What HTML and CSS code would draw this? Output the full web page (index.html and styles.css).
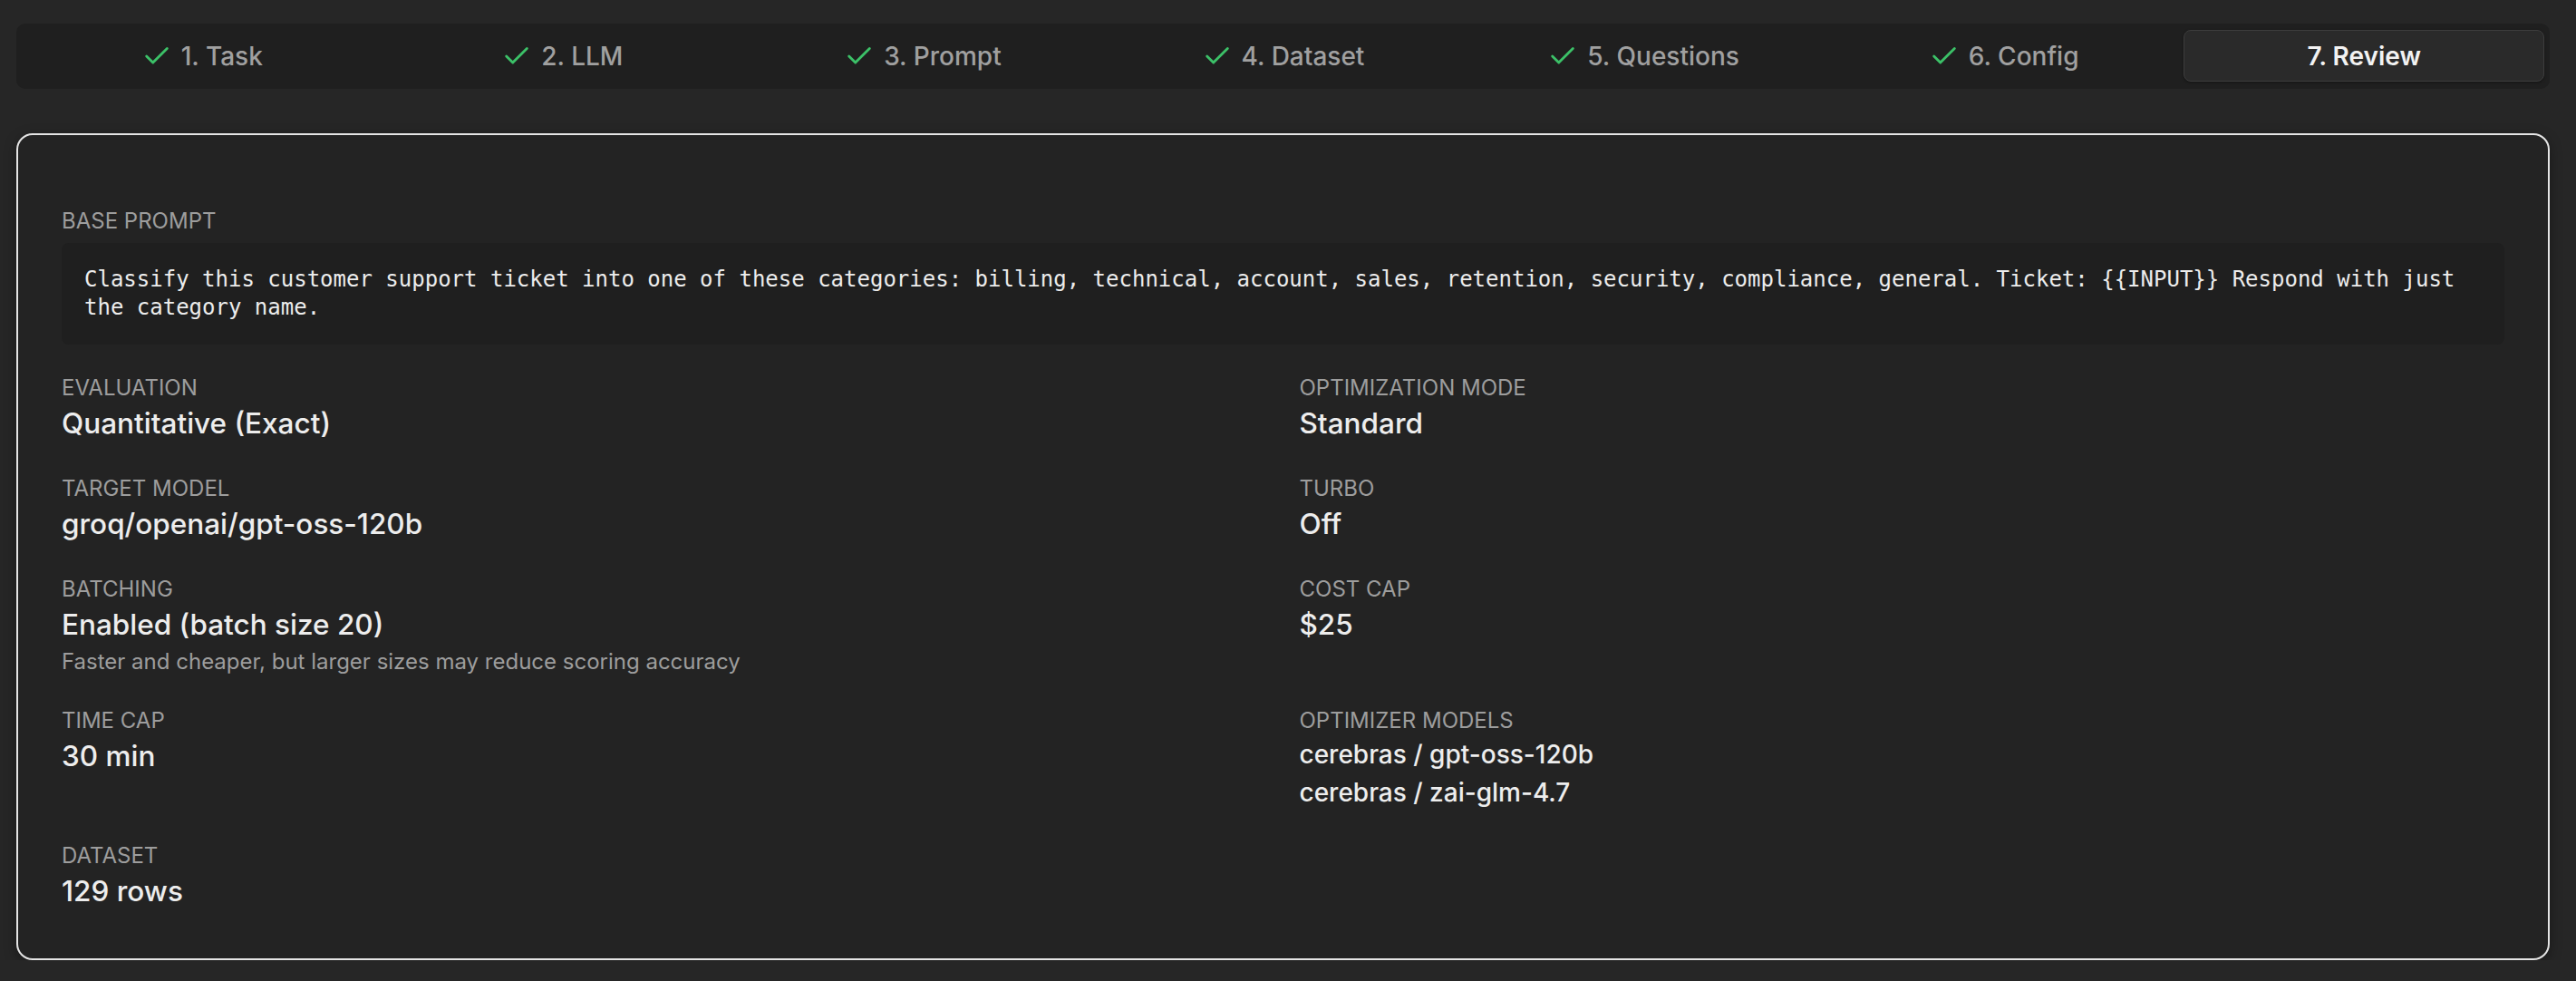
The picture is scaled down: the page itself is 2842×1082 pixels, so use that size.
FILE: index.html
```html
<!DOCTYPE html>
<html lang="en">
<head>
    <meta charset="UTF-8">
    <meta name="viewport" content="width=device-width, initial-scale=1.0">
    <title>Optimizer - Review</title>
    <link rel="stylesheet" href="styles.css">
</head>
<body>
    <div class="wizard">
        <!-- step bar, all steps done except the current one -->
        <nav class="steps">
            <div class="step done">
                <svg class="check" viewBox="0 0 24 24"><polyline points="20 6 9 17 4 12"/></svg>
                <span>1. Task</span>
            </div>
            <div class="step done">
                <svg class="check" viewBox="0 0 24 24"><polyline points="20 6 9 17 4 12"/></svg>
                <span>2. LLM</span>
            </div>
            <div class="step done">
                <svg class="check" viewBox="0 0 24 24"><polyline points="20 6 9 17 4 12"/></svg>
                <span>3. Prompt</span>
            </div>
            <div class="step done">
                <svg class="check" viewBox="0 0 24 24"><polyline points="20 6 9 17 4 12"/></svg>
                <span>4. Dataset</span>
            </div>
            <div class="step done">
                <svg class="check" viewBox="0 0 24 24"><polyline points="20 6 9 17 4 12"/></svg>
                <span>5. Questions</span>
            </div>
            <div class="step done">
                <svg class="check" viewBox="0 0 24 24"><polyline points="20 6 9 17 4 12"/></svg>
                <span>6. Config</span>
            </div>
            <div class="step active">
                <span>7. Review</span>
            </div>
        </nav>

        <!-- review card -->
        <section class="card">
            <div class="prompt">
                <div class="label">Base prompt</div>
                <div class="prompt-text">Classify this customer support ticket into one of these categories: billing, technical, account, sales, retention, security, compliance, general. Ticket: {{INPUT}} Respond with just the category name.</div>
            </div>

            <div class="summary">
                <div class="field">
                    <div class="label">Evaluation</div>
                    <div class="value">Quantitative (Exact)</div>
                </div>
                <div class="field">
                    <div class="label">Optimization mode</div>
                    <div class="value">Standard</div>
                </div>
                <div class="field">
                    <div class="label">Target model</div>
                    <div class="value">groq/openai/gpt-oss-120b</div>
                </div>
                <div class="field">
                    <div class="label">Turbo</div>
                    <div class="value">Off</div>
                </div>
                <div class="field">
                    <div class="label">Batching</div>
                    <div class="value">Enabled (batch size 20)</div>
                    <div class="hint">Faster and cheaper, but larger sizes may reduce scoring accuracy</div>
                </div>
                <div class="field">
                    <div class="label">Cost cap</div>
                    <div class="value">$25</div>
                </div>
                <div class="field">
                    <div class="label">Time cap</div>
                    <div class="value">30 min</div>
                </div>
                <div class="field">
                    <div class="label">Optimizer models</div>
                    <ul class="models">
                        <li>cerebras / gpt-oss-120b</li>
                        <li>cerebras / zai-glm-4.7</li>
                    </ul>
                </div>
                <div class="field">
                    <div class="label">Dataset</div>
                    <div class="value">129 rows</div>
                </div>
            </div>
        </section>
    </div>
</body>
</html>
```

FILE: styles.css
```css
/* review step of the optimizer wizard */
body {
    margin: 0;
    background-color: #262626;
    font-family: Inter, "Noto Sans", sans-serif;
    color: #ececec;
}
.wizard {
    padding: 26px 29px 0 18px;
}

/* step bar */
.steps {
    display: grid;
    grid-template-columns: repeat(7, 1fr);
    padding: 7px 6px 8px 6px;
    background-color: #1f1f1f;
    border-radius: 10px;
}
.step {
    display: flex;
    align-items: center;
    justify-content: center;
    gap: 10px;
    height: 57px;
    box-sizing: border-box;
    font-size: 28px;
    font-weight: 500;
    color: #a0a0a0;
}
.step.active {
    background-color: #2a2a2a;
    border: 1.5px solid #3d3d3d;
    border-radius: 8px;
    color: #f2f2f2;
    font-weight: 600;
    box-shadow: 0 1px 3px rgba(0,0,0,0.35);
}
.check {
    width: 34px;
    height: 34px;
    fill: none;
    stroke: #3cc168;
    stroke-width: 2;
    stroke-linecap: round;
    stroke-linejoin: round;
}

/* card */
.card {
    margin-top: 49px;
    padding: 79px 48px 54px 48px;
    background-color: #232323;
    border: 2px solid #e4e4e4;
    border-radius: 18px;
    box-shadow: 0 4px 14px rgba(0,0,0,0.35);
}
.label {
    font-size: 24px;
    line-height: 32px;
    color: #9d9d9d;
    text-transform: uppercase;
}
.prompt-text {
    margin-top: 8px;
    padding: 25px;
    background-color: #1f1f1f;
    border-radius: 8px;
    font-family: "DejaVu Sans Mono", monospace;
    font-size: 24px;
    line-height: 31px;
    color: #ececec;
}
.summary {
    display: grid;
    grid-template-columns: 1fr 1fr;
    column-gap: 36px;
    row-gap: 36px;
    align-items: start;
    margin-top: 32px;
}
.value {
    margin-top: 3px;
    font-size: 31.5px;
    line-height: 40px;
    font-weight: 500;
    color: #ededed;
}
.hint {
    margin-top: 5px;
    margin-bottom: -3px;
    font-size: 24px;
    line-height: 32px;
    color: #9d9d9d;
}
.models {
    list-style: none;
    margin: 3px 0 0 0;
    padding: 0;
    display: flex;
    flex-direction: column;
    gap: 6px;
}
.models li {
    font-size: 28px;
    line-height: 36px;
    font-weight: 500;
    color: #ededed;
}
```
